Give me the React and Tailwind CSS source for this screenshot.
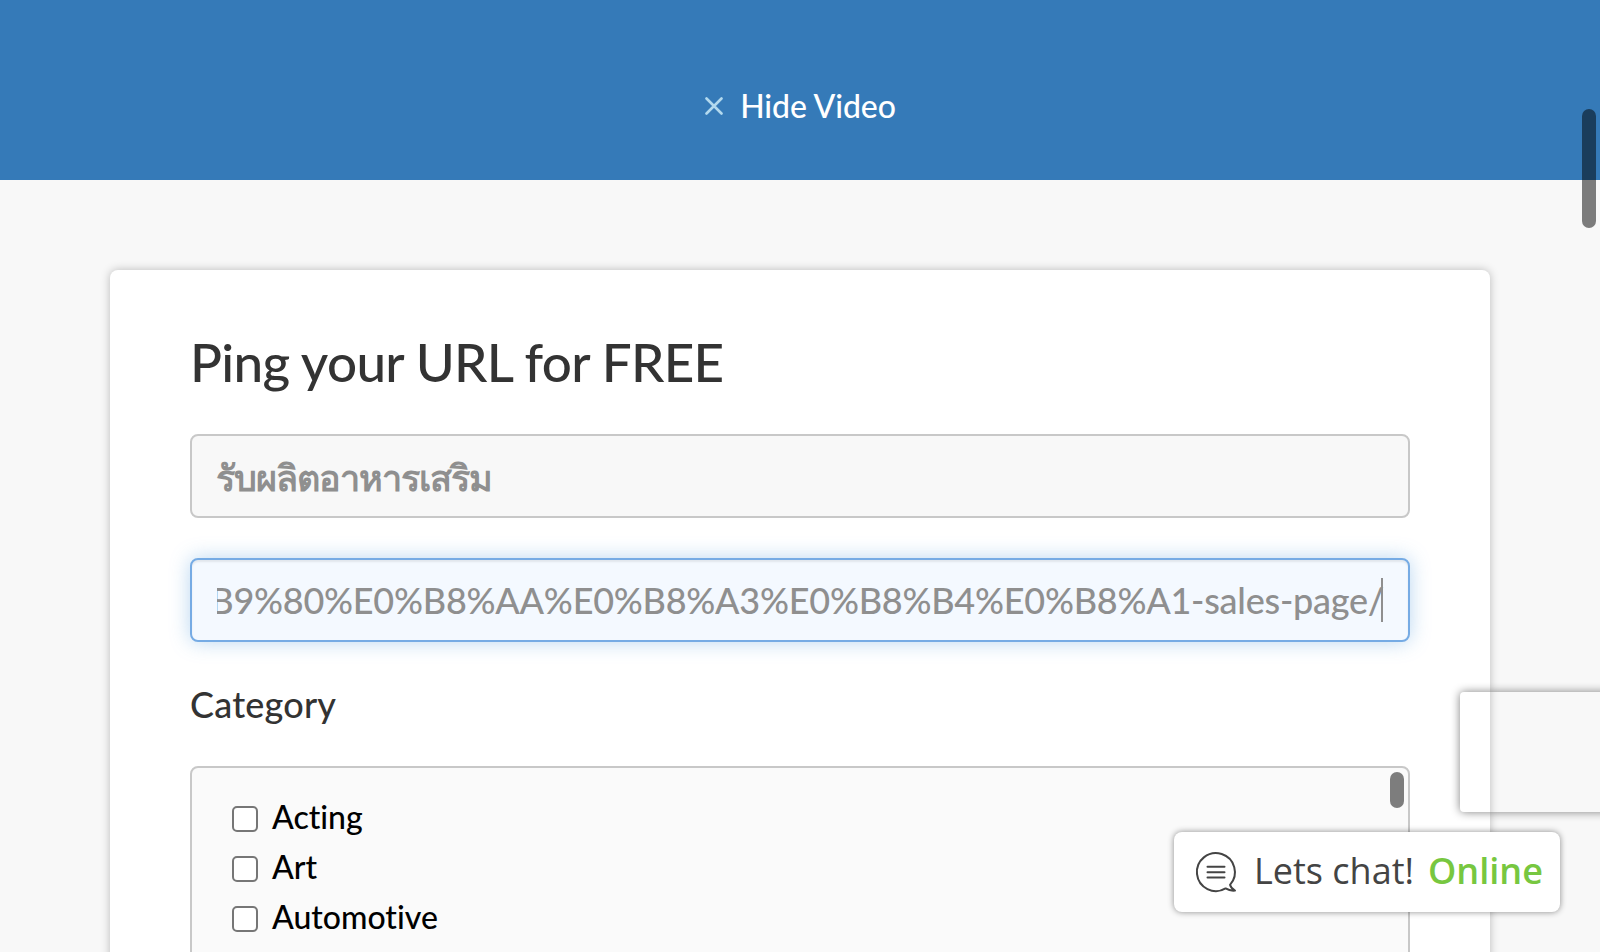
const categories = ["Acting", "Art", "Automotive"];

function HideVideoBanner() {
  return (
    <header className="flex h-[180px] items-start justify-center bg-[#357ab8] pt-[84px]">
      <button className="flex items-center text-[32px] leading-[44px] font-medium text-white">
        <svg className="mr-[17px] ml-px size-[18px]" viewBox="0 0 18 18" fill="none" stroke="#b2d9ee" strokeWidth="2.6" strokeLinecap="round">
          <path d="M1.5 1.5 16.5 16.5M16.5 1.5 1.5 16.5" />
        </svg>
        <span className="tracking-[-0.1px]">Hide Video</span>
      </button>
    </header>
  );
}

function CategoryList() {
  return (
    <div className="relative h-[400px] rounded-lg border-2 border-[#c8c8c8] bg-[#fafafa] px-10 pt-[24px]">
      {categories.map((name) => (
        <label key={name} className="flex h-[50px] items-center text-[32px] leading-[50px] font-medium text-black">
          <span className="mt-[4px] mr-[14px] size-[26px] rounded-[5px] border-2 border-[#767676] bg-white" />
          <span>{name}</span>
        </label>
      ))}
      <div className="absolute top-1 right-1 h-9 w-[14px] rounded-full bg-[#7d7d7d]" />
    </div>
  );
}

function PingForm() {
  return (
    <main className="mx-[110px] mt-[90px] h-[720px] rounded-lg bg-white px-20 pt-[59px] shadow-[0_0_10px_rgba(0,0,0,0.25)]">
      <h1 className="text-[53px] leading-[66px] font-medium tracking-[-0.67px] text-[#333]">Ping your URL for FREE</h1>
      <div className="mt-[39px] flex h-[84px] items-center rounded-lg border-2 border-[#c8c8c8] bg-[#f8f8f8] px-6 pt-[2px] text-[36px] font-semibold text-[#8f8f8f]">
        <span className="tracking-[-1px]">รับผลิตอาหารเสริม</span>
      </div>
      <div className="mt-10 h-[84px] rounded-lg border-2 border-[#76abe4] bg-[#f4f9ff] pr-6 pl-[25px] shadow-[0_0_20px_rgba(82,155,220,0.4),inset_0_2px_2px_rgba(0,0,0,0.075)]">
        <div className="flex h-full items-center justify-end overflow-hidden text-[36px] font-medium whitespace-nowrap text-[#8f8f8f]">
          <span className="tracking-[-0.25px]">B9%80%E0%B8%AA%E0%B8%A3%E0%B8%B4%E0%B8%A1-sales-page/</span>
          <span className="mr-px ml-[-3px] h-11 w-[2px] shrink-0 bg-[#8f8f8f]" />
        </div>
      </div>
      <h2 className="mt-[38px] mb-[38px] text-[36px] leading-[48px] font-medium tracking-[0.2px] text-[#333]">Category</h2>
      <CategoryList />
    </main>
  );
}

function ChatIcon() {
  return (
    <svg className="size-10 shrink-0 overflow-visible" viewBox="0 0 40 40" fill="none" stroke="#444" strokeWidth="2" strokeLinecap="round" strokeLinejoin="round">
      <path d="M34 32.8A19 19 0 1 0 29.6 36.4C32.5 38.2 35.6 39 39 38.6C36.4 37.2 34.8 35.4 34 32.8Z" />
      <path d="M11.5 14.8H28.5M11.5 20.2H28.5M11.5 25.6H28.5" />
    </svg>
  );
}

export default function App() {
  return (
    <div className="relative h-[952px] w-[1600px] overflow-hidden bg-[#f8f8f8] font-['Lato','Noto_Sans',sans-serif] [font-variant-ligatures:none]">
      <HideVideoBanner />
      <PingForm />
      <div className="absolute top-[692px] left-[1460px] h-[120px] w-[160px] rounded-[4px] shadow-[0_0_10px_#808080]" />
      <div className="absolute top-[832px] left-[1174px] flex h-20 w-[386px] items-center rounded-lg bg-white pl-[22px] font-['Open_Sans',sans-serif] text-[36px] whitespace-nowrap text-[#444] shadow-[0_0_6px_rgba(0,0,0,0.45)]">
        <ChatIcon />
        <span className="-mt-[2px] ml-[18px]">Lets chat!</span>
        <span className="-mt-[2px] ml-[14px] font-semibold text-[#77c740]">Online</span>
      </div>
      <div className="absolute top-[109px] right-1 h-[119px] w-[14px] rounded-full bg-black/50" />
    </div>
  );
}
